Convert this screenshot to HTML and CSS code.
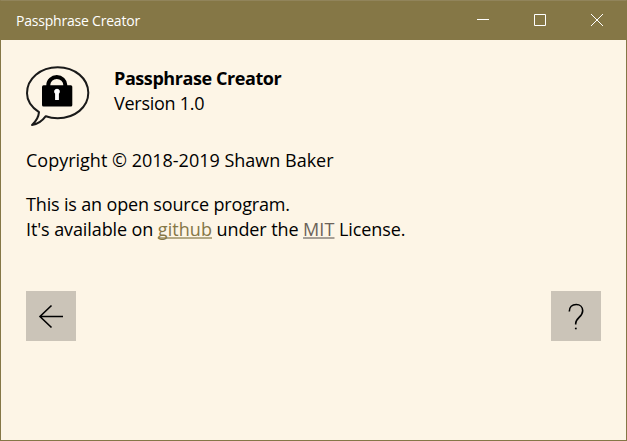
FILE: index.html
```
<!DOCTYPE html>
<html lang="en">
<head>
<meta charset="utf-8">
<title>Passphrase Creator</title>
<link rel="stylesheet" href="styles.css">
</head>
<body>
<div class="window">
  <header class="titlebar">
    <h1 class="title">Passphrase Creator</h1>
    <div class="controls">
      <svg class="control" viewBox="0 0 57 39" aria-label="Minimize"><path d="M26 18.5h12" /></svg>
      <svg class="control" viewBox="0 0 57 39" aria-label="Maximize"><path d="M26.5 13.5h11v11h-11z" /></svg>
      <svg class="control" viewBox="0 0 57 39" aria-label="Close"><path d="M26 13l12 12M38 13l-12 12" /></svg>
    </div>
  </header>
  <main class="content">
    <section class="product">
      <svg class="logo" viewBox="0 0 64 61" aria-hidden="true">
        <path class="bubble" d="M13 46.2C6 41.500 1 34.500 1 27.200C1 12.500 14.500 1.200 31.700 1.200S62.300 12.500 62.300 26.800S49 52.200 31.700 52.200C27.500 52.200 23.500 51.600 19.800 50.200C17 54 12.500 58.200 6 58.900C10 55.500 12.600 51 13 46.200Z"/>
        <path class="shackle" d="M22.300 22v-3a8.500 8 0 0 1 17 0v3"/>
        <rect x="16" y="19.300" width="30.300" height="21.200" rx="1.500"/>
        <path class="keyhole" d="M31 22.700a2.900 2.900 0 0 1 1.900 5.100v6.200h-3.800v-6.200a2.900 2.900 0 0 1 1.900-5.100z"/>
      </svg>
      <div>
        <h2 class="name">Passphrase Creator</h2>
        <p class="version">Version 1.0</p>
      </div>
    </section>
    <p class="copyright">Copyright © 2018-2019 Shawn Baker</p>
    <p class="source">This is an open source program.</p>
    <p class="license">It's available on <a class="github">github</a> under the <a class="mit">MIT</a> License.</p>
    <nav class="actions">
      <button class="action" aria-label="Back"><svg viewBox="0 0 50 50"><path d="M37 25.500H14M25.500 14.500L14 25.500l11.500 11"/></svg></button>
      <button class="action" aria-label="Help"><svg viewBox="0 0 50 50"><path d="M18.300 20.500c0-4.300 2.900-7 6.900-7 3.800 0 6.500 2.500 6.500 6.200 0 6.300-7 7-7 12.800v1"/><path d="M23.900 37.500h1.800"/></svg></button>
    </nav>
  </main>
</div>
</body>
</html>
```
FILE: styles.css
```
* { box-sizing: border-box; margin: 0; padding: 0; }
body { font-family: "Open Sans", "Noto Sans", sans-serif; color: #000; }
.window { height: 441px; border: 1px solid #857746; border-top-color: #91845b; background: #fdf5e6; }
.titlebar { display: flex; justify-content: space-between; height: 39px; padding: 0 4px 0 15px; background: #857746; }
.title { font-size: 14px; font-weight: 400; line-height: 39px; letter-spacing: -0.21px; color: #fff; white-space: nowrap; }
.controls { display: flex; }
.control { width: 57px; height: 39px; fill: none; stroke: #fff; stroke-width: 1; }
.content { padding: 26px 25px 0; font-size: 18px; line-height: 25px; white-space: nowrap; }
.product { display: flex; gap: 24px; height: 62px; }
.logo { width: 64px; height: 61px; }
.bubble { fill: none; stroke: #1a1a1a; stroke-width: 2; stroke-linejoin: round; }
.shackle { fill: none; stroke: #000; stroke-width: 4; }
.keyhole { fill: #fff; }
.name { font-size: 18px; font-weight: 700; line-height: 25px; letter-spacing: -0.42px; }
.version { letter-spacing: -0.27px; }
.copyright { margin-top: 20px; }
.source { margin-top: 19px; letter-spacing: -0.16px; }
.license { letter-spacing: -0.1px; }
.github, .mit { text-decoration: underline; text-decoration-thickness: 2px; text-underline-offset: 1px; text-decoration-skip-ink: none; }
.github { color: #857746; text-decoration-color: #b5aa86; letter-spacing: 0.06px; }
.mit { color: #6b6259; text-decoration-color: #a69f96; letter-spacing: 0.1px; }
.actions { display: flex; justify-content: space-between; margin-top: 49px; }
.action { width: 50px; height: 50px; border: 0; background: #cbc4b8; }
.action svg { display: block; width: 50px; height: 50px; fill: none; stroke: #000; stroke-width: 1.600; }
```
